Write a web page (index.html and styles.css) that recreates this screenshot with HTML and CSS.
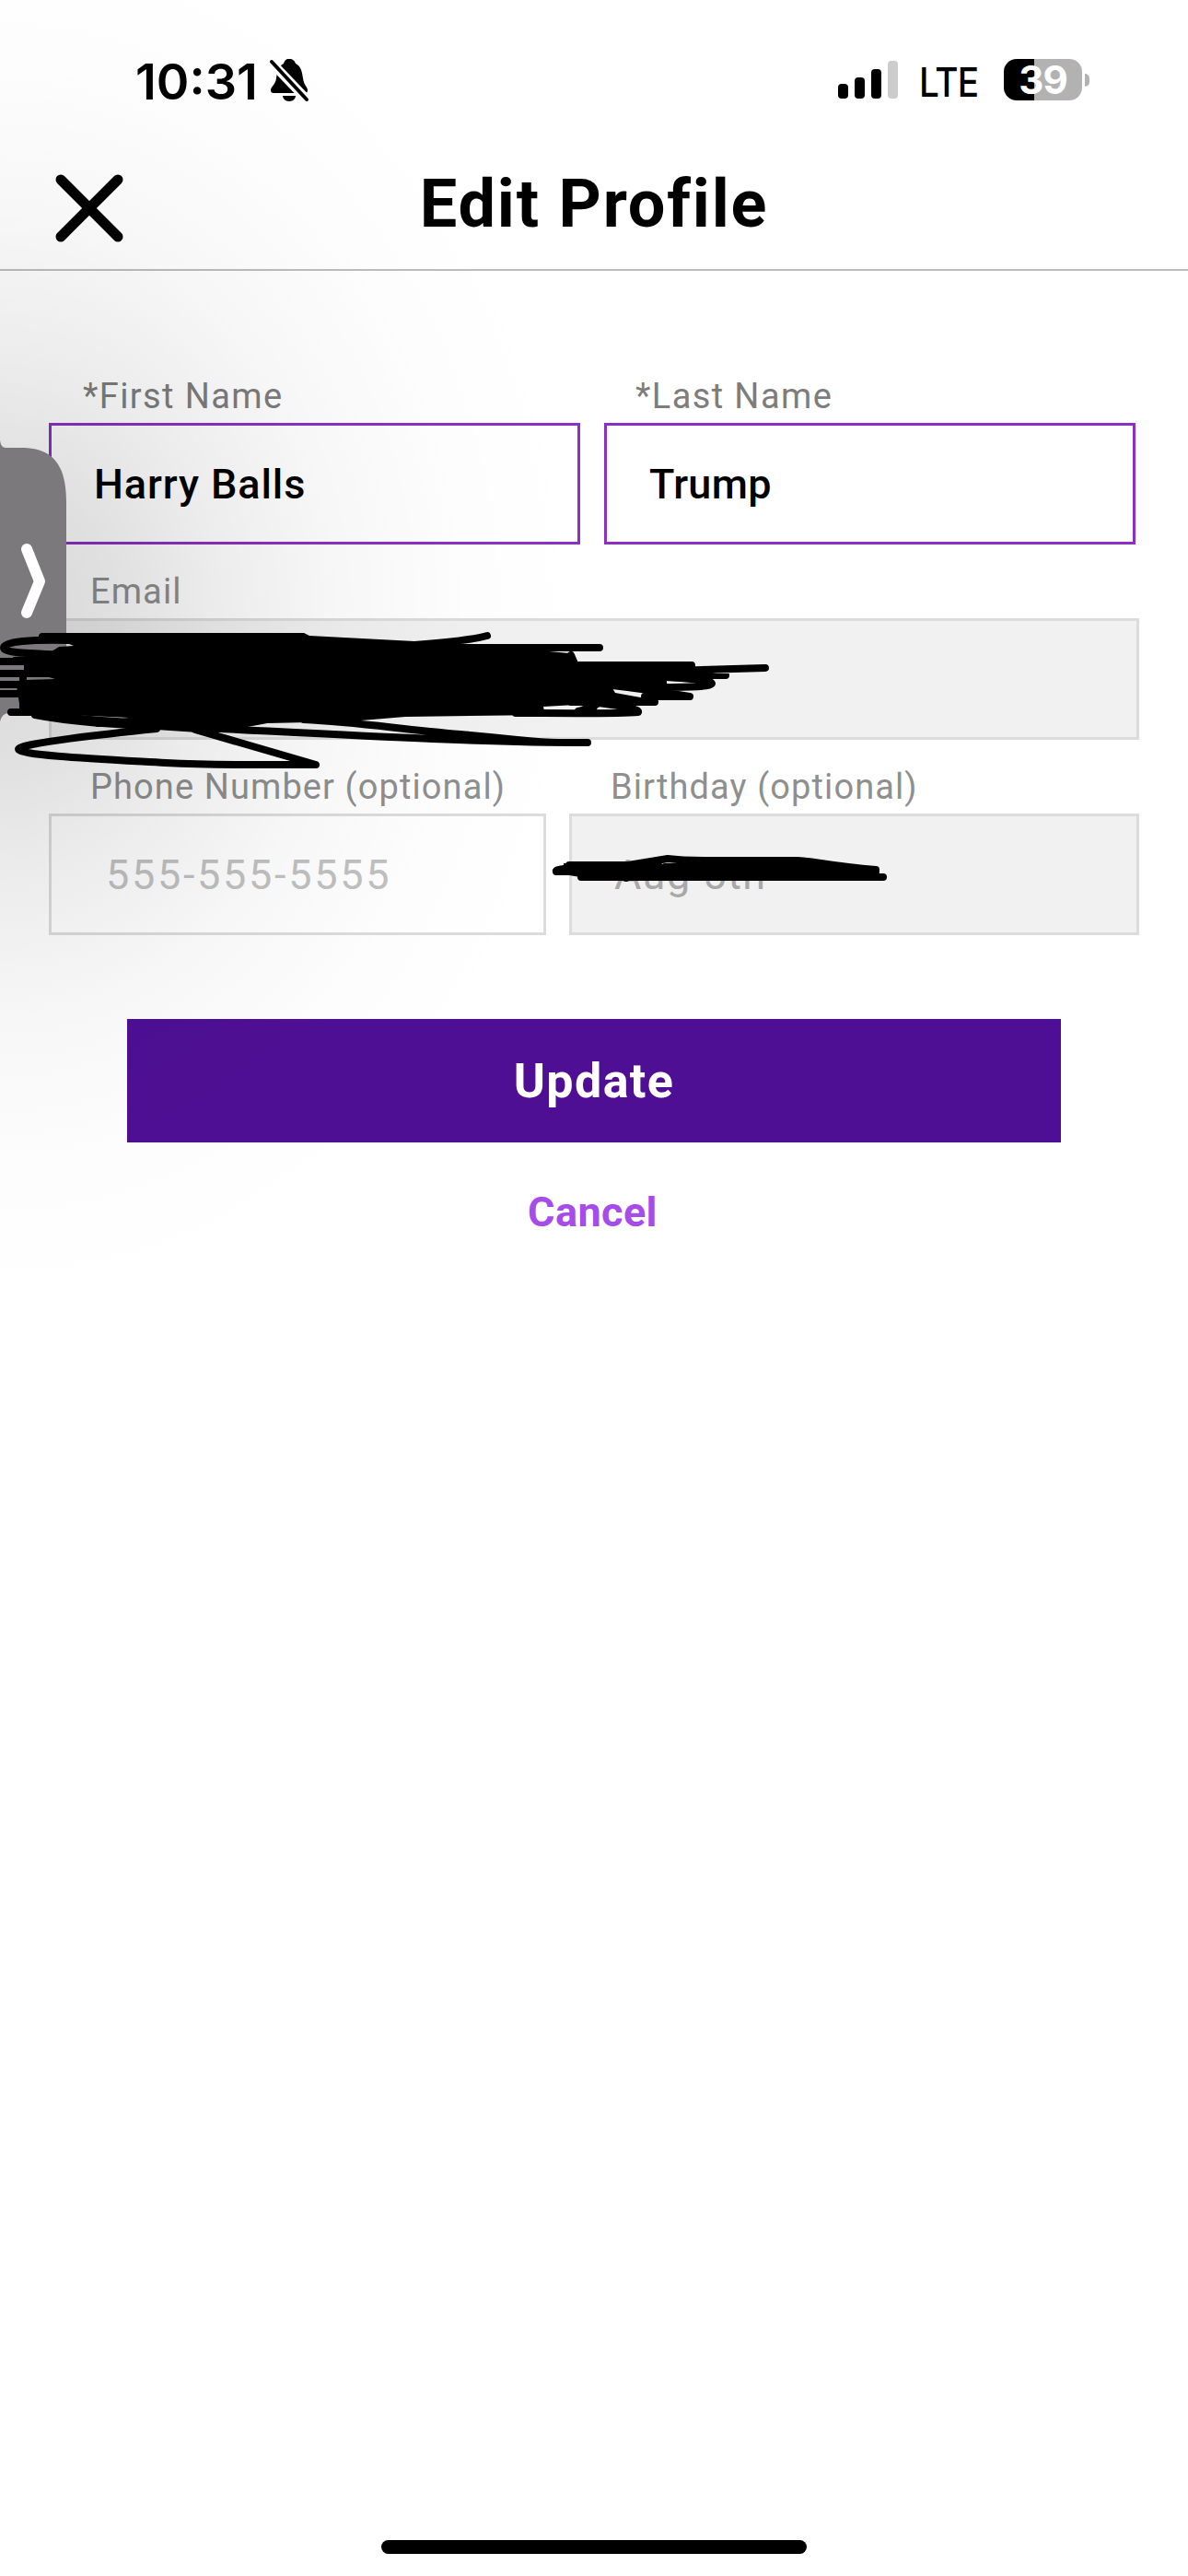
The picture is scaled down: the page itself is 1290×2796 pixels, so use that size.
FILE: index.html
```html
<!doctype html>
<html lang="en">
    <head>
        <meta charset="utf-8">
        <title>Edit Profile</title>
        <link rel="stylesheet" href="styles.css">
    </head>
    <body>
        <div class="statusBar">
            <div class="clock">
                <span class="time">10:31</span>
                <svg class="bell" width="44" height="48" viewBox="0 0 44 48">
                    <path d="M22 1c4 0 6 2 7 5 6 3 7 9 8 16 1 8 5 9 5 13 0 2-1 3-3 3H5c-2 0-3-1-3-3 0-4 5-6 6-13 1-7 2-13 8-16 1-3 2-5 6-5z"/>
                    <path d="M15 41h14c0 3-3 6-7 6s-7-3-7-6z"/>
                    <path class="gap" d="M1 3l41 43"/>
                    <path class="slash" d="M3 4l38 41"/>
                </svg>
            </div>
            <div class="indicators">
                <div class="signal"><i class="b1"></i><i class="b2"></i><i class="b3"></i><i class="b4"></i></div>
                <span class="network">LTE</span>
                <div class="battery">39</div>
                <div class="nub"></div>
            </div>
        </div>

        <div class="header">
            <svg class="close" width="74" height="74" viewBox="0 0 74 74"><path d="M6 6l62 62M68 6L6 68"/></svg>
            <h1>Edit Profile</h1>
        </div>

        <div class="form">
            <div class="row names">
                <div class="field">
                    <label class="required">*First Name</label>
                    <div class="input active first">Harry Balls</div>
                </div>
                <div class="field">
                    <label class="required last">*Last Name</label>
                    <div class="input active">Trump</div>
                </div>
            </div>
            <div class="row">
                <div class="field">
                    <label>Email</label>
                    <div class="input disabled"></div>
                </div>
            </div>
            <div class="row contact">
                <div class="field">
                    <label>Phone Number (optional)</label>
                    <div class="input phone">555-555-5555</div>
                </div>
                <div class="field">
                    <label>Birthday (optional)</label>
                    <div class="input disabled birthday">Aug 5th</div>
                </div>
            </div>
            <a class="button">Update</a>
            <a class="cancel">Cancel</a>
        </div>

        <div class="homeBar"></div>

        <div class="shade"></div>
        <svg class="overlay" width="1290" height="900" viewBox="0 400 1290 900">
            <!-- side tab -->
            <path class="tab" d="M0 478q1 8 6 8h16c34 0 50 16 50 60v170c0 42-16 58-50 58H10q-8 0-10 9z"/>
            <path class="chevron" d="M29 596l14 35-14 34"/>

            <!-- email scribble -->
            <path class="ink" d="M44 687H330L336 690 450 696 510 699 618 709 626 718H750L758 727 788 733 724 737 724 744 665 747 668 752 712 760 590 767 592 776 440 778 380 783 290 785 285 786 230 796 110 788 105 783 140 779 75 776 40 776 22 770 18 745 28 738 60 737 26 727 26 722 15 720 14 713 50 711 64 702 80 701 70 697z"/>
            <path class="pen" d="M46 691H328M75 695C35 694 4 696 4 703 4 709 30 709 75 711M-5 718H75M-5 731H75M-5 743H75M-5 753H75M25 735V772M12 773H35C60 778 90 781 140 784M106 785H200"/>
            <path class="pen" d="M450 700C490 697 515 694 529 690M450 703H651M620 711L623 718M700 722H751M730 728L831 725M700 733H788M720 735C760 737 773 739 773 742 772 746 740 746 690 746M665 744C700 748 725 752 749 756H700M620 762H711M650 763C680 767 694 770 693 773 670 775 600 774 560 774M645 740V767M628 772C640 769 650 763 665 757"/>
            <path class="pen" d="M170 791C120 796 20 807 20 813 20 820 110 824 180 828 240 831 290 830 343 830L212 792M38 776C80 784 130 787 180 788 330 795 500 806 638 806M330 781C390 784 430 791 500 797S580 806 606 806"/>

            <!-- birthday scribble -->
            <path class="ink" d="M612 937H680V944H862V937L882 937 951 944V952H630L612 949z"/>
            <path class="pen" d="M604 945C606 943 612 944 618 941H670L725 932C740 934 750 934 765 934H865C880 934 900 940 951 944M604 946H951M618 939H715M722 941H880M631 952H959M680 952V953"/>
        </svg>
    </body>
</html>
```

FILE: styles.css
```css
* {
    box-sizing: border-box;
}
body {
    margin: 0;
    height: 2796px;
    display: flex;
    flex-direction: column;
    position: relative;
    overflow: hidden;
    background-color: #fff;
    color: #000;
    font-family: Roboto, "Liberation Sans", sans-serif;
}

.statusBar {
    height: 174px;
    padding: 62px 107px 0 147px;
    display: flex;
    justify-content: space-between;
    align-items: flex-start;
    font-family: Inter, "Liberation Sans", sans-serif;
}
.clock, .indicators {
    display: flex;
    height: 49px;
    align-items: center;
}
.time {
    width: 145px;
    padding-top: 3px;
    font-size: 54px;
    font-weight: 600;
    line-height: 49px;
}
.bell .gap {
    stroke: #fff;
    stroke-width: 10;
}
.bell .slash {
    stroke: #000;
    stroke-width: 4;
    stroke-linecap: round;
}
.signal {
    display: flex;
    align-items: flex-end;
    gap: 7px;
    height: 41px;
    margin-right: 23px;
}
.signal i {
    width: 11px;
    border-radius: 4px;
    background-color: #000;
}
.signal .b1 { height: 16px; }
.signal .b2 { height: 23px; }
.signal .b3 { height: 32px; }
.signal .b4 { height: 41px; background-color: #ccc; }
.network {
    width: 92px;
    padding-top: 4px;
    font-size: 44px;
    font-weight: 500;
    letter-spacing: -1px;
    transform: scaleX(0.88);
    transform-origin: left;
}
.battery {
    width: 85px;
    height: 45px;
    border-radius: 14px;
    background: linear-gradient(to right, #000 33px, #b2b2b2 33px);
    color: #fff;
    font-size: 42px;
    font-weight: 700;
    line-height: 45px;
    letter-spacing: -1px;
    text-align: center;
}
.nub {
    width: 5px;
    height: 14px;
    margin-left: 3px;
    border-radius: 0 5px 5px 0;
    background-color: #b2b2b2;
}

.header {
    height: 120px;
    padding: 0 60px;
    display: grid;
    grid-template-columns: 74px 1fr 74px;
    align-items: start;
    border-bottom: 2px solid #bdbdbd;
}
.close {
    margin-top: 15px;
    fill: none;
    stroke: #000;
    stroke-width: 11;
    stroke-linecap: round;
}
h1 {
    margin: 6px 0 0;
    font-size: 72px;
    font-weight: 700;
    letter-spacing: 1.8px;
    line-height: 84px;
    text-align: center;
    white-space: nowrap;
}

.form {
    padding: 109px 53px 0;
    display: flex;
    flex-direction: column;
}
.row {
    display: grid;
    height: 212px;
}
.names {
    grid-template-columns: 577px 577px;
    gap: 26px;
}
.contact {
    grid-template-columns: 540px 619px;
    gap: 25px;
}
label {
    display: block;
    height: 56px;
    padding-left: 45px;
    line-height: 54px;
    font-size: 38px;
    letter-spacing: 1.1px;
    color: #8f8f8f;
    white-space: nowrap;
}
label.required {
    padding-left: 37px;
    letter-spacing: 1.4px;
    color: #7d7d7d;
}
label.last {
    padding-left: 34px;
}
.input {
    height: 132px;
    padding-left: 46px;
    border: 3px solid #dcdcdc;
    font-size: 45px;
    line-height: 128px;
    letter-spacing: 0.3px;
    white-space: nowrap;
}
.active {
    border-color: #8b30c4;
    font-weight: 500;
}
.first {
    letter-spacing: 0.9px;
}
.disabled {
    background-color: #f1f1f1;
    color: #a8a8a8;
}
.birthday {
    letter-spacing: 1.5px;
}
.phone {
    padding-left: 59px;
    letter-spacing: 2.7px;
    color: #c1c1c1;
}
.button {
    width: 1014px;
    height: 134px;
    margin: 67px auto 0;
    background-color: #4f0f95;
    color: #fff;
    font-size: 52px;
    font-weight: 700;
    line-height: 136px;
    letter-spacing: 1.4px;
    text-align: center;
}
.cancel {
    margin: 48px 3px 0 0;
    color: #a54ceb;
    font-size: 45px;
    font-weight: 700;
    line-height: 56px;
    letter-spacing: 0.4px;
    text-align: center;
}

.homeBar {
    width: 462px;
    height: 15px;
    margin: auto auto 24px;
    border-radius: 8px;
    background-color: #000;
}

/* soft shadow cast by the side tab */
.shade {
    position: absolute;
    left: 0;
    top: 0;
    width: 700px;
    height: 1450px;
    background: radial-gradient(ellipse 640px 760px at 0 670px, rgba(0,0,0,0.155), rgba(0,0,0,0.12) 20%, rgba(0,0,0,0.075) 37%, rgba(0,0,0,0.03) 58%, rgba(0,0,0,0.008) 80%, rgba(0,0,0,0));
}
.overlay {
    position: absolute;
    left: 0;
    top: 400px;
}
.tab {
    fill: #7b797c;
}
.chevron {
    fill: none;
    stroke: #fff;
    stroke-width: 12;
    stroke-linecap: round;
    stroke-linejoin: round;
}
.pen {
    fill: none;
    stroke: #000;
    stroke-width: 8;
    stroke-linecap: round;
    stroke-linejoin: round;
}
```
